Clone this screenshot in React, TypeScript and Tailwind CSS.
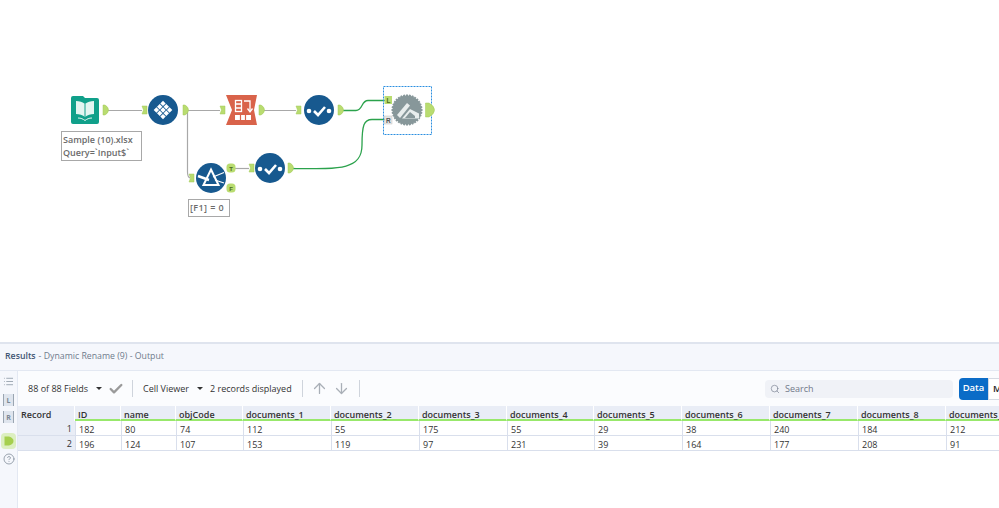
import React from 'react';
import { ArrowUp, ArrowDown, Search, Check, CircleHelp, List } from 'lucide-react';

const columns = [
  { name: 'ID', w: 'w-[46px]', a: '182', b: '196' },
  { name: 'name', w: 'w-[55px]', a: '80', b: '124' },
  { name: 'objCode', w: 'w-[67px]', a: '74', b: '107' },
  { name: 'documents_1', w: 'w-[88px]', a: '112', b: '153' },
  { name: 'documents_2', w: 'w-[88px]', a: '55', b: '119' },
  { name: 'documents_3', w: 'w-[88px]', a: '175', b: '97' },
  { name: 'documents_4', w: 'w-[87px]', a: '55', b: '231' },
  { name: 'documents_5', w: 'w-[88px]', a: '29', b: '39' },
  { name: 'documents_6', w: 'w-[88px]', a: '38', b: '164' },
  { name: 'documents_7', w: 'w-[88px]', a: '240', b: '177' },
  { name: 'documents_8', w: 'w-[88px]', a: '184', b: '208' },
  { name: 'documents_9', w: 'w-[88px]', a: '212', b: '91' },
];

// output anchor, D shape pointing right
const OutAnchor = ({ x, y }: { x: number; y: number }) => (
  <path d={`M${x} ${y - 5}h2q3.500 2 3.500 5t-3.500 5h-2z`} fill="#b9dc70" stroke="#a3cb5a" strokeWidth="0.5" />
);

// input anchor, notched on the left
const InAnchor = ({ x, y }: { x: number; y: number }) => (
  <path d={`M${x} ${y - 4}h5v8h-5l1.500 -4z`} fill="#b9dc70" stroke="#a3cb5a" strokeWidth="0.5" />
);

const CheckNode = ({ cx, cy }: { cx: number; cy: number }) => (
  <g>
    <circle cx={cx} cy={cy} r="15" fill="#17598f" />
    <circle cx={cx - 10} cy={cy + 1} r="2.3" fill="#fff" />
    <circle cx={cx + 10} cy={cy + 1} r="2.3" fill="#fff" />
    <path d={`M${cx - 5} ${cy + 1}l4 4l7 -8`} fill="none" stroke="#fff" strokeWidth="2.6" />
  </g>
);

const gearTeeth = Array.from({ length: 32 }, (_, i) => (i * 360) / 32);

// 3x3 grid turned by 45 degrees
const diamondCells = [-1, 0, 1].flatMap((a) => [-1, 0, 1].map((b) => [(a - b) * 3.3, (a + b) * 3.3]));

const Canvas = () => (
  <div className="relative h-[342px] bg-white">
    <svg className="absolute left-0 top-0" width="999" height="342" viewBox="0 0 999 342">
      {/* wires */}
      <g fill="none" stroke="#a8a8a8" strokeWidth="1.2">
        <path d="M108 110.500H142" />
        <path d="M187 110.500H220" />
        <path d="M187.500 111V172Q187.500 177 190 178" />
        <path d="M263 110.500H296" />
        <path d="M235 168.500H249" />
      </g>
      <g fill="none" stroke="#2ba24c" strokeWidth="1.300">
        <path d="M343 110.500H356C363 110.500 361 100.500 368 100.500H385" />
        <path d="M292 168.500C340 169 362 170 362 145C362 125 364 119.500 372 119.500H385" />
      </g>

      {/* input data */}
      <path d="M71 98a2 2 0 0 1 2 -2h10l2 2h12a2 2 0 0 1 2 2v22a2 2 0 0 1 -2 2h-24a2 2 0 0 1 -2 -2z" fill="#10a08a" />
      <path d="M76 101c3 0 7 1 9 3c2 -2 6 -3 9 -3v13c-3 0 -7 1 -9 3c-2 -2 -6 -3 -9 -3z" fill="#e3f5f1" />
      <path d="M85 104v13" stroke="#10a08a" strokeWidth="1" />
      <path d="M78 118c3 0 5 1 7 2.500c2 -1.500 4 -2.500 7 -2.500" fill="none" stroke="#e3f5f1" strokeWidth="1" />
      <OutAnchor x={103} y={110} />

      {/* record id style node */}
      <InAnchor x={142} y={110} />
      <circle cx="163" cy="110" r="15" fill="#17598f" />
      <g fill="#fff">
        {diamondCells.map(([dx, dy]) => (
          <rect key={`${dx}-${dy}`} x={163 + dx - 1.9} y={110 + dy - 1.9} width="3.800" height="3.800" transform={`rotate(45 ${163 + dx} ${110 + dy})`} />
        ))}
      </g>
      <OutAnchor x={183} y={110} />

      {/* dynamic rename node */}
      <InAnchor x={220} y={110} />
      <path d="M226 95h31l-3 15l3 15h-31l6 -15z" fill="#d9634a" />
      <g fill="none" stroke="#fff" strokeWidth="1.300">
        <rect x="235.500" y="100.500" width="6" height="11" />
        <path d="M236 104h5M236 108h5" />
        <path d="M244 101h6v10" />
        <path d="M247.500 108.500l2.500 3.500l2.500 -3.500" />
      </g>
      <rect x="235" y="115" width="16" height="5" fill="#fff" />
      <path d="M240.500 115v5M245.500 115v5" stroke="#d9634a" strokeWidth="1.200" />
      <OutAnchor x={259} y={110} />

      <InAnchor x={296} y={110} />
      <CheckNode cx={319} cy={110} />
      <OutAnchor x={338} y={110} />

      {/* filter */}
      <InAnchor x={189} y={178} />
      <circle cx="211" cy="178" r="15" fill="#17598f" />
      <path d="M211 169.500l7.500 15.500h-15z" fill="none" stroke="#fff" strokeWidth="2" />
      <path d="M198 176l11 4" stroke="#fff" strokeWidth="2.400" />
      <path d="M213 177l11 -4.500M215 180l9 3" stroke="#fff" strokeWidth="1.200" />
      <rect x="226.500" y="163.500" width="9" height="9" rx="3.500" fill="#b9dc70" />
      <rect x="226.500" y="183.500" width="9" height="9" rx="3.500" fill="#b9dc70" />
      <text x="229.300" y="170.500" fontSize="6" fontWeight="700" fill="#4d6b1e" fontFamily="'Liberation Sans', sans-serif">T</text>
      <text x="229.300" y="190.500" fontSize="6" fontWeight="700" fill="#4d6b1e" fontFamily="'Liberation Sans', sans-serif">F</text>

      <InAnchor x={249} y={168} />
      <CheckNode cx={270} cy={168} />
      <OutAnchor x={288} y={168} />

      {/* join node, selected */}
      <rect x="383.500" y="86.500" width="48" height="48" fill="none" stroke="#2b8fe0" strokeDasharray="2 1" />
      <g fill="#87979a">
        <circle cx="407" cy="110" r="14.500" />
        {gearTeeth.map((a) => (
          <rect key={a} x="406" y="94.500" width="2" height="2" transform={`rotate(${a} 407 110)`} />
        ))}
      </g>
      <path d="M397 115l10 -12l3 2.500l-10 12.500z" fill="#e8eded" />
      <path d="M402 118.500l8 -9.500l9 4.500l0 5z" fill="#e8eded" />
      <path d="M405 118l5 -6l5 4v2z" fill="#87979a" />
      <rect x="384.500" y="96" width="7.500" height="8" fill="#b9dc70" />
      <text x="386.500" y="102.500" fontSize="6.500" fontWeight="700" fill="#4d6b1e" fontFamily="'Liberation Sans', sans-serif">L</text>
      <rect x="384.500" y="116" width="7.500" height="8" fill="#e6e6e6" stroke="#c4c4c4" strokeWidth="0.500" />
      <text x="386" y="122.500" fontSize="6.500" fontWeight="700" fill="#555" fontFamily="'Liberation Sans', sans-serif">R</text>
      <path d="M425.500 103h3.500q5.500 3 5.500 7t-5.500 7h-3.500z" fill="#b9dc70" stroke="#a3cb5a" strokeWidth="0.500" />
    </svg>

    {/* annotations */}
    <div className="absolute left-[61px] top-[131px] flex h-[30px] w-[81px] flex-col justify-center border border-[#a8a8a8] bg-white pl-[1px] text-[9px] font-semibold leading-[13px] text-[#6b6b6b]">
      <span>Sample (10).xlsx</span>
      <span>Query=`Input$`</span>
    </div>
    <div className="absolute left-[188px] top-[199px] flex h-[18px] w-[42px] items-center border border-[#a8a8a8] bg-white pl-[1px] text-[9px] font-semibold tracking-[0.4px] text-[#6b6b6b]">
      [F1] = 0
    </div>
  </div>
);

const Sidebar = () => (
  <div className="flex w-[18px] shrink-0 flex-col items-center border-r border-[#e3e8f2] bg-[#f5f7fc] pt-[5px] text-[#7b8794]">
    <List size={11} strokeWidth={1.5} />
    <div className="mt-[7px] flex h-[12px] w-[11px] items-center justify-center border-x border-[#9aa5b1] bg-[#dfe5ee] text-[7px] font-bold leading-none">L</div>
    <div className="mt-[5px] flex h-[12px] w-[11px] items-center justify-center border-x border-[#9aa5b1] bg-[#dfe5ee] text-[7px] font-bold leading-none">R</div>
    <div className="mt-[10px] flex h-[16px] w-[15px] items-center justify-center rounded-sm bg-[#dcefc0]">
      <svg width="10" height="10" viewBox="0 0 10 10">
        <path d="M0.500 0.500h4.500q4.500 1.500 4.500 4.500t-4.500 4.500h-4.500z" fill="#a5cf4e" />
      </svg>
    </div>
    <CircleHelp size={12} strokeWidth={1.5} className="mt-[4px]" />
  </div>
);

const Toolbar = () => (
  <div className="flex h-[35px] shrink-0 items-center whitespace-nowrap bg-[#fbfcfe] text-[9px] text-[#333]">
    <span className="ml-[10px] w-[60px]">88 of 88 Fields</span>
    <span className="ml-[8px] h-0 w-0 border-x-[3px] border-t-[3px] border-x-transparent border-t-[#333]" />
    <Check size={16} strokeWidth={3.5} className="ml-[6px] text-[#9a9a9a]" />
    <span className="ml-[8px] h-[17px] w-px bg-[#cfd4dc]" />
    <span className="ml-[10px] w-[47px]">Cell Viewer</span>
    <span className="ml-[7px] h-0 w-0 border-x-[3px] border-t-[3px] border-x-transparent border-t-[#333]" />
    <span className="ml-[7px] w-[82px]">2 records displayed</span>
    <span className="ml-[10px] h-[17px] w-px bg-[#cfd4dc]" />
    <ArrowUp size={17} strokeWidth={1.8} className="ml-[8px] text-[#a9afb7]" />
    <ArrowDown size={17} strokeWidth={1.8} className="ml-[5px] text-[#a9afb7]" />
    <span className="ml-[9px] h-[17px] w-px bg-[#cfd4dc]" />
    <div className="ml-auto flex h-[18px] w-[188px] shrink-0 items-center rounded-sm bg-[#f0f2f7] pl-[5px] text-[#70798a]">
      <Search size={10} strokeWidth={1.5} />
      <span className="ml-[5px] text-[9px]">Search</span>
    </div>
    <div className="ml-[6px] flex h-[22px] w-[29px] shrink-0 items-center justify-center rounded-l-sm bg-[#0b6cc7] text-[9.500px] font-semibold text-white">Data</div>
    <div className="h-[22px] w-[11px] shrink-0 overflow-hidden border-y border-l border-[#d5dae3] bg-white pl-[4px] text-[9.500px] font-semibold leading-[20px] text-[#222]">Metadata</div>
  </div>
);

const Table = () => (
  <div className="flex-1 overflow-hidden bg-white text-[9px] leading-none text-[#333]">
    <div className="flex h-[15px]">
      <div className="w-[57px] shrink-0 border-r border-[#fff] bg-[#e9edf6] pl-[3px] pt-[4px] font-semibold">Record</div>
      {columns.map((c) => (
        <div key={c.name} className={`${c.w} shrink-0 border-b-2 border-r border-b-[#98e86b] border-r-white bg-[#e9edf6] pl-[3px] pt-[4px] font-semibold whitespace-nowrap`}>
          {c.name}
        </div>
      ))}
    </div>
    {(['a', 'b'] as const).map((k, i) => (
      <div key={k} className="flex h-[15px] border-b border-[#d9dfec]">
        <div className="w-[57px] shrink-0 bg-[#e9edf6] pr-[3px] pt-[3px] text-right">{i + 1}</div>
        {columns.map((c) => (
          <div key={c.name} className={`${c.w} shrink-0 border-l border-[#d9dfec] bg-white pl-[3px] pt-[4px] first:border-l-0`}>
            {c[k]}
          </div>
        ))}
      </div>
    ))}
  </div>
);

export default function App() {
  return (
    <div className="h-[508px] w-[999px] overflow-hidden bg-white font-['Open_Sans','Noto_Sans',sans-serif]">
      <Canvas />
      <div className="flex h-[166px] flex-col border-t-2 border-[#dfe4ee]">
        <div className="flex h-[27px] shrink-0 items-center border-b border-[#e3e8f2] bg-[#f5f7fc] pl-[5px] text-[8.750px] text-[#6f7b8c]">
          <span className="font-semibold text-[#3f5573]">Results</span>
          <span className="ml-[3px]">- Dynamic Rename (9) - Output</span>
        </div>
        <div className="flex min-h-0 flex-1">
          <Sidebar />
          <div className="flex min-w-0 flex-1 flex-col">
            <Toolbar />
            <Table />
          </div>
        </div>
      </div>
    </div>
  );
}
